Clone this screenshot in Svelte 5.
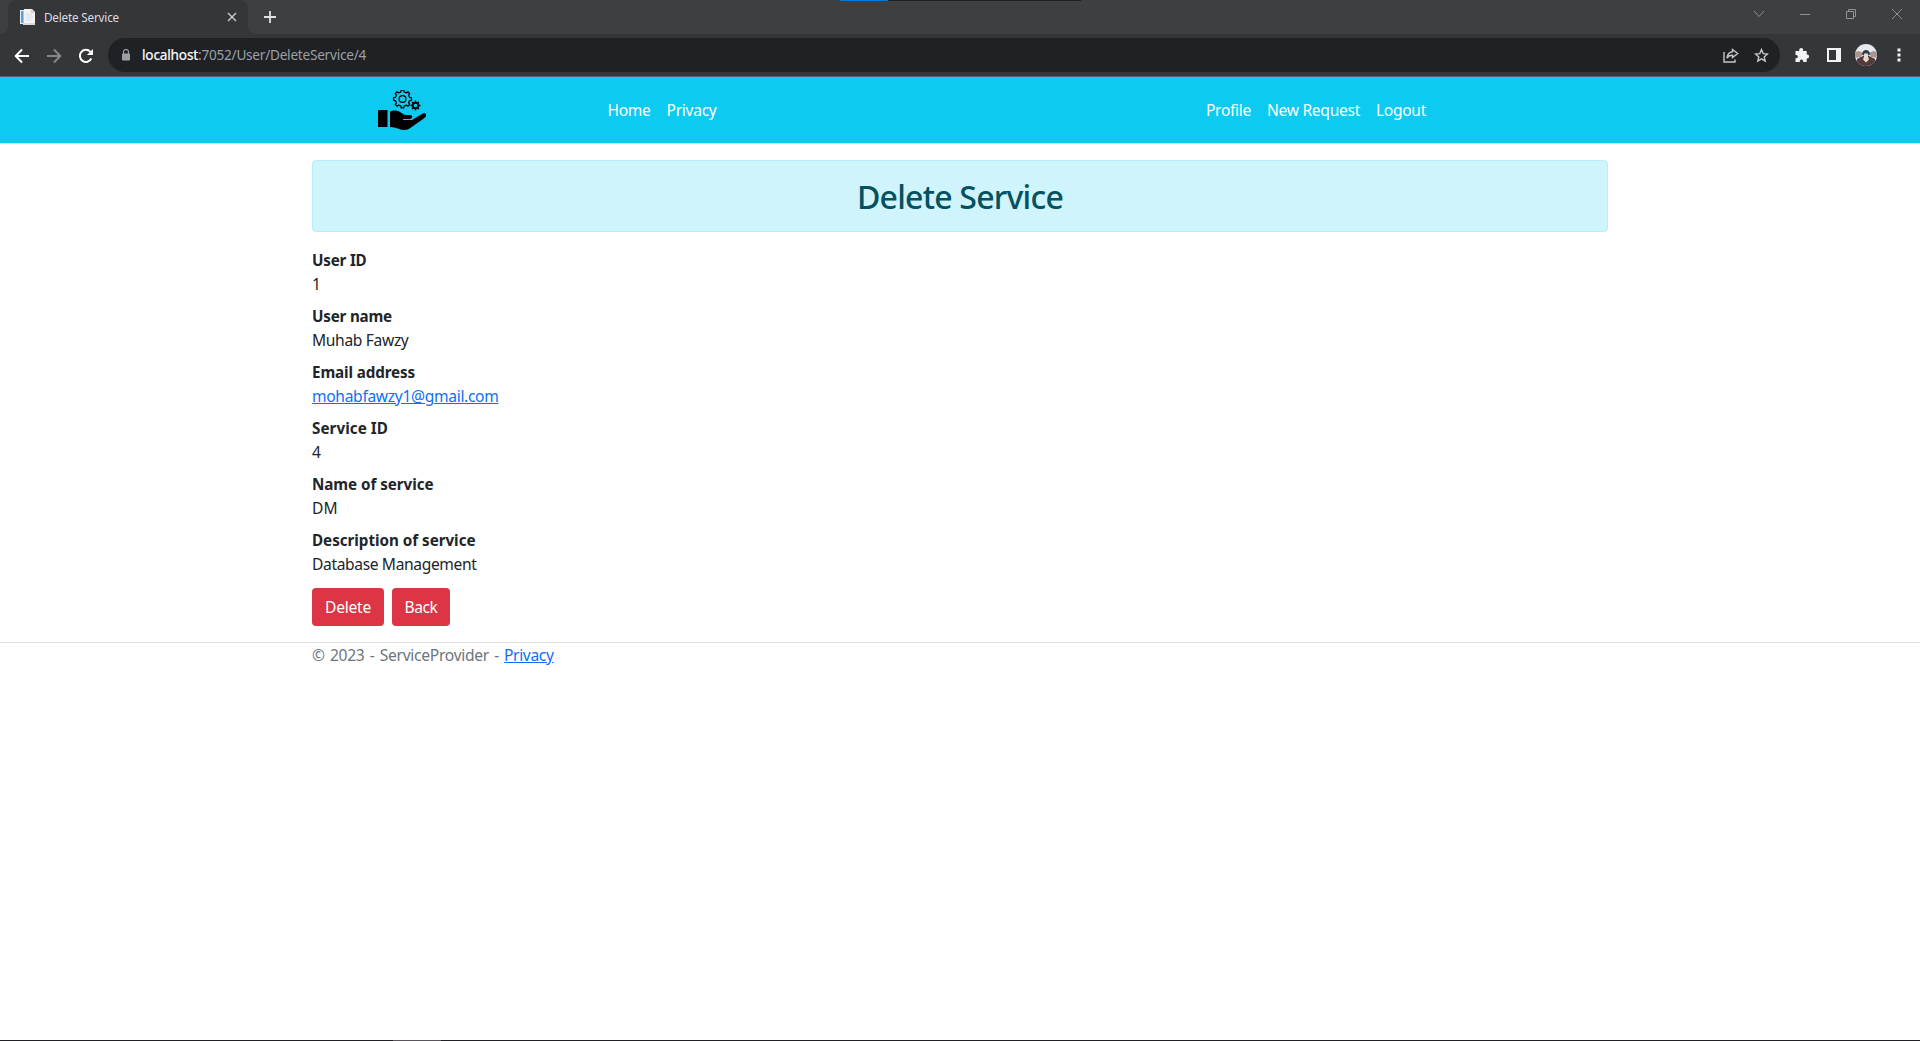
<script>
  const title = 'Delete Service';

  const fields = [
    { label: 'User ID', lw: 54.5, value: '1', vw: 8.6 },
    { label: 'User name', lw: 80, value: 'Muhab Fawzy', vw: 96.5 },
    { label: 'Email address', lw: 103, value: 'mohabfawzy1@gmail.com', vw: 186.5, email: true },
    { label: 'Service ID', lw: 76, value: '4', vw: 8.6 },
    { label: 'Name of service', lw: 121.5, value: 'DM', vw: 26 },
    { label: 'Description of service', lw: 163.5, value: 'Database Management', vw: 164.5 }
  ];

  const mainLinks = [
    { text: 'Home', w: 43 },
    { text: 'Privacy', w: 50 }
  ];
  const userLinks = [
    { text: 'Profile', w: 45 },
    { text: 'New Request', w: 93 },
    { text: 'Logout', w: 50 }
  ];

  // Tracks the text so that it sets to the given width.
  function fit(node, width) {
    const natural = node.getBoundingClientRect().width;
    const gap = (width - natural) / node.textContent.length;
    node.style.letterSpacing = `${gap.toFixed(3)}px`;
  }

  // Outline of a cog with square teeth.
  function cog(cx, cy, outer, inner, teeth) {
    const pts = [];
    const step = (Math.PI * 2) / teeth;
    for (let i = 0; i < teeth; i++) {
      const a = i * step - Math.PI / 2;
      for (const [r, o] of [[inner, -0.29], [outer, -0.18], [outer, 0.18], [inner, 0.29]]) {
        pts.push(`${(cx + r * Math.cos(a + o * step)).toFixed(2)} ${(cy + r * Math.sin(a + o * step)).toFixed(2)}`);
      }
    }
    return `M${pts.join('L')}Z`;
  }
</script>

<div class="window">
  <div class="tabstrip">
    <div class="tab">
      <svg class="favicon" width="17" height="17" viewBox="0 0 17 17">
        <path d="M1 1h10v14H1z" fill="#e8eef4" />
        <path d="M2 2h2.500v12H2z" fill="#5d9fd0" />
        <path d="M5 0h8l3 3v12H5z" fill="#f4f3f1" />
        <path d="M12 0v4h4z" fill="#cfd1d4" />
        <path d="M7 5h6M7 7h7M7 9h7M7 11h5" stroke="#dcdfe3" />
        <path d="M4 14h12v2H4z" fill="#d9d9d9" />
      </svg>
      <span class="tab-title"><span use:fit={75}>{title}</span></span>
      <svg width="10" height="10" viewBox="0 0 10 10"><path d="M1 1l8 8M9 1l-8 8" stroke="#c8cacd" stroke-width="1.400" /></svg>
    </div>
    <svg class="plus" width="12" height="12" viewBox="0 0 12 12"><path d="M6 0v12M0 6h12" stroke="#dfe1e3" stroke-width="1.800" /></svg>
    <div class="meter"></div>
    <div class="controls">
      <svg width="12" height="12" viewBox="0 0 12 12"><path d="M1 3l5 5.500L11 3" /></svg>
      <svg width="12" height="12" viewBox="0 0 12 12"><path d="M1 6.500h10" /></svg>
      <svg width="12" height="12" viewBox="0 0 12 12"><path d="M1.500 3.500h7v7h-7zM3.500 3.500v-2h7v7h-2" /></svg>
      <svg width="12" height="12" viewBox="0 0 12 12"><path d="M1 1l10 10M11 1L1 11" /></svg>
    </div>
  </div>

  <div class="toolbar">
    <div class="nav-buttons">
      <svg width="16" height="16" viewBox="0 0 16 16"><path d="M15 8H2M8 1.500L1.700 8 8 14.500" fill="none" stroke="#fff" stroke-width="2" /></svg>
      <svg width="16" height="16" viewBox="0 0 16 16"><path d="M1 8h13M8 1.500L14.300 8 8 14.500" fill="none" stroke="#85878a" stroke-width="2" /></svg>
      <svg width="16" height="16" viewBox="0 0 16 16"><path d="M13.300 10.500A6 6 0 1 1 12.400 3.900" fill="none" stroke="#fff" stroke-width="2" /><path d="M15 1v6H9z" fill="#fff" /></svg>
    </div>
    <div class="omnibox">
      <svg class="lock" width="10" height="12" viewBox="0 0 10 12"><path d="M1.500 5h7v6h-7z" fill="#9aa0a6" stroke="#9aa0a6" stroke-linejoin="round" /><path d="M2.500 5V3a2.500 2.500 0 0 1 5 0v2" fill="none" stroke="#9aa0a6" stroke-width="1.200" /></svg>
      <span class="host" use:fit={56}>localhost</span><span class="path" use:fit={168}>:7052/User/DeleteService/4</span>
      <svg class="share" width="16" height="15" viewBox="0 0 16 15"><path d="M1 4v10h11v-2.500" /><path d="M9.500 1.500L14.700 5.500 9.500 9.500V7.300C7 7.300 5.200 8.200 4 10 4.300 6.500 6 4.200 9.500 3.700Z" /></svg>
      <svg class="star" width="15" height="15" viewBox="0 0 15 15"><path d="M7.500 1.600l1.700 4 4.300.4-3.300 2.900 1 4.200-3.700-2.200-3.700 2.200 1-4.200L1.500 6l4.300-.4z" /></svg>
    </div>
    <div class="extensions">
      <svg width="16" height="16" viewBox="0 0 16 16"><path d="M1.500 4h3.700V3a2 2 0 0 1 4 0v1h3.500v3.600h.5a1.900 1.900 0 0 1 0 3.800h-.5V15H9.200v-.7a1.700 1.700 0 0 0-3.400 0v.7H1.500v-3.700h.7a1.700 1.700 0 0 0 0-3.400h-.7z" fill="#f1f3f4" /></svg>
      <svg class="panel" width="14" height="14" viewBox="0 0 14 14"><path d="M0 0h14v14H0z" fill="#f1f3f4" /><path d="M2 2h7v10H2z" fill="#35363a" /></svg>
      <svg class="avatar" width="22" height="22" viewBox="0 0 22 22">
        <clipPath id="face"><circle cx="11" cy="11" r="11" /></clipPath>
        <g clip-path="url(#face)">
          <path d="M0 0h22v22H0z" fill="#e7e9ee" />
          <path d="M0 8l4-1 4 2-2 4-6 1zM22 8l-4-1-4 2 2 4 6 1z" fill="#a3979a" />
          <path d="M2 22l0-7 6-3h6l6 3 0 7z" fill="#56393a" />
          <path d="M7 10.500c0-6 8-6 8 0l-1.500 1h-5z" fill="#343a48" />
          <path d="M9 9.500h4v3l1 3-3 3-3-3 1-3z" fill="#e8dbc8" />
          <path d="M1 9l2 2M21 9l-2 2" stroke="#d08a56" stroke-width="1.500" />
        </g>
      </svg>
      <svg class="dots" width="4" height="14" viewBox="0 0 4 14"><path d="M.5.500h3v3h-3zM.5 5.500h3v3h-3zM.5 10.500h3v3h-3z" fill="#f1f3f4" /></svg>
    </div>
  </div>

  <header>
    <svg class="logo" width="48" height="42" viewBox="0 0 48 42">
      <path d="M0 20h9.500v17H0z" />
      <path d="M12 21.500c3-1.500 7-1.500 10 .5 2 1.500 4 3 6 3h4c3 0 3 3.500 0 4h-7v1h9l9-5.500c4-2.500 6.500-.5 4.500 2.500C44 30 38 34 33 37.500c-4 3-8 3-12 1.500-3-1.300-6-2-9-2z" />
      <path d={cog(24.500, 9, 9, 7.200, 8)} fill="none" stroke="#000" stroke-width="1.300" stroke-linejoin="round" />
      <circle cx="24.500" cy="9" r="3.400" fill="none" stroke="#000" stroke-width="1.200" />
      <path d={cog(37.500, 15.500, 5, 3.700, 8)} />
      <circle cx="37.500" cy="15.500" r="1.800" fill="#0dcaf0" />
    </svg>
    <nav class="main-links">
      {#each mainLinks as link}<a href="#top"><span use:fit={link.w}>{link.text}</span></a>{/each}
    </nav>
    <nav class="user-links">
      {#each userLinks as link}<a href="#top"><span use:fit={link.w}>{link.text}</span></a>{/each}
    </nav>
  </header>

  <main>
    <div class="alert"><h2><span use:fit={206}>{title}</span></h2></div>
    <dl>
      {#each fields as field}
        <dt><span use:fit={field.lw}>{field.label}</span></dt>
        <dd>
          {#if field.email}
            <a href="mailto:{field.value}" use:fit={field.vw}>{field.value}</a>
          {:else}
            <span use:fit={field.vw}>{field.value}</span>
          {/if}
        </dd>
      {/each}
    </dl>
    <div class="actions">
      <button class="delete"><span use:fit={46}>Delete</span></button>
      <button class="back"><span use:fit={33}>Back</span></button>
    </div>
  </main>

  <footer>
    <span class="copy"><span use:fit={187}>© 2023 - ServiceProvider -</span></span>
    <a href="#top"><span use:fit={49.500}>Privacy</span></a>
  </footer>
  <div class="taskbar-edge"><div class="highlight"></div></div>
</div>

<style>
  :global(body) { margin: 0; background: #fff; }
  .window {
    display: flex; flex-direction: column; box-sizing: border-box;
    width: 1920px; height: 1041px; overflow: hidden;
    font: 15.600px/24px "Noto Sans", "Open Sans", sans-serif; color: #212529;
  }
  svg { flex: none; display: block; }
  span, a { white-space: nowrap; }

  .tabstrip { position: relative; display: flex; align-items: center; flex: none; height: 34px; padding-left: 8px; background: #3c4043; }
  .tab {
    position: relative; display: flex; align-items: center; box-sizing: border-box;
    width: 240px; height: 34px; padding: 0 11px 0 11px;
    border-radius: 8px 8px 0 0; background: #35363a;
  }
  .tab::before, .tab::after { content: ""; position: absolute; bottom: 0; width: 8px; height: 8px; }
  .tab::before { left: -8px; background: radial-gradient(circle at 0 0, transparent 7.500px, #35363a 8px); }
  .tab::after { right: -8px; background: radial-gradient(circle at 100% 0, transparent 7.500px, #35363a 8px); }
  .tab-title { flex: 1; margin: -1px 0 0 8px; font-size: 11.700px; color: #dadce0; }
  .plus { margin-left: 16px; }
  .meter { position: absolute; left: 840px; top: 0; width: 241px; height: 1px; background: linear-gradient(90deg, #0078d7 48px, #202020 48px); }
  .controls { display: flex; gap: 34px; margin: -6px 17px 0 auto; }
  .controls path { fill: none; stroke: #8f9294; }

  .toolbar { display: flex; align-items: center; flex: none; box-sizing: border-box; height: 43px; padding: 0 19px 0 14px; background: #35363a; border-bottom: 1px solid #5b6064; }
  .nav-buttons { display: flex; gap: 16px; margin-top: 1px; }
  .omnibox { display: flex; align-items: center; box-sizing: border-box; width: 1672px; height: 34px; margin-left: 14px; padding: 0 11px 0 13px; border-radius: 17px; background: #202124; font-size: 13.600px; }
  .lock { margin-right: 11px; }
  .host { color: #fff; -webkit-text-stroke: 0.200px #fff; }
  .path { color: #9aa0a6; }
  .share { margin-left: auto; }
  .star { margin-left: 15px; }
  .share path, .star path { fill: none; stroke: #c4c7ca; stroke-width: 1.400; }
  .extensions { display: flex; align-items: center; margin-left: auto; }
  .panel { margin-left: 17px; }
  .avatar { margin-left: 14px; }
  .dots { margin-left: 20px; }

  header { display: flex; align-items: center; flex: none; box-sizing: border-box; height: 67px; padding-left: 378px; background: #0dcaf0; border-bottom: 1px solid #dee2e6; }
  header a { color: #fff; text-decoration: none; }
  .logo { margin-top: 2px; }
  nav { display: flex; gap: 16px; }
  .main-links { margin-left: 181.500px; }
  .user-links { margin-left: 489.500px; }

  main { width: 1296px; margin: 16px auto 0; }
  .alert { box-sizing: border-box; height: 72px; padding: 16px; text-align: center; color: #055160; background: #cff4fc; border: 1px solid #b6effb; border-radius: 4px; }
  h2 { margin: 0; font-size: 32px; font-weight: 500; line-height: 40px; }
  dl { margin: 16px 0 0; }
  dt { font-weight: 700; font-size: 15.200px; }
  dd { margin: 0 0 8px; }
  dd a, footer a { color: #0d6efd; text-decoration: underline; }
  .actions { display: flex; gap: 8px; margin-top: 12px; }
  button { height: 38px; padding: 0; border: 0; border-radius: 4px; background: #dc3545; color: #fff; font: inherit; }
  .delete { width: 72px; }
  .back { width: 58px; }
  footer { display: flex; gap: 5px; margin-top: 16px; padding-left: 312px; border-top: 1px solid #dee2e6; color: #6c757d; }
  .copy { word-spacing: 1.500px; }
  .taskbar-edge { height: 1px; margin-top: auto; padding-left: 393px; background: #202026; }
  .highlight { width: 48px; height: 1px; background: #5a545c; }
</style>
